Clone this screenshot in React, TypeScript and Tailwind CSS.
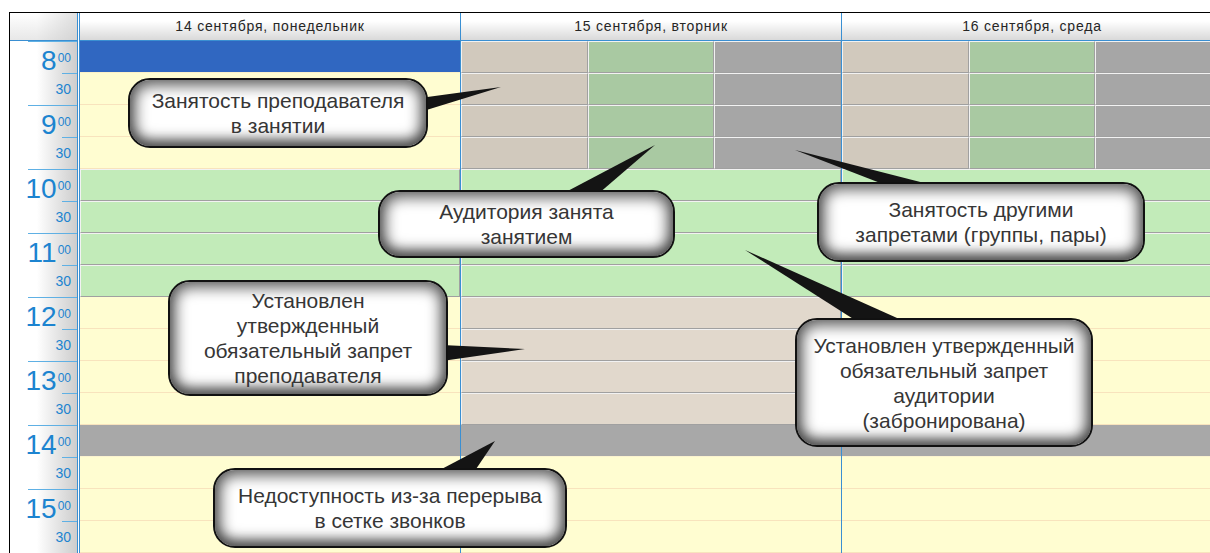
import React from 'react';

type Kind = 'Y' | 'G' | 'Beige' | 'Gray' | 'Blue' | 'Split';

const days: { title: string; rows: Kind[]; cls: string }[] = [
  {
    title: '14 сентября, понедельник',
    rows: ['Blue', 'Y', 'Y', 'Y', 'G', 'G', 'G', 'G', 'Y', 'Y', 'Y', 'Y', 'Gray', 'Y', 'Y', 'Y'],
    cls: 'w-[381px] border-r border-[#3a8fd2]',
  },
  {
    title: '15 сентября, вторник',
    rows: ['Split', 'Split', 'Split', 'Split', 'G', 'G', 'G', 'G', 'Beige', 'Beige', 'Beige', 'Beige', 'Gray', 'Y', 'Y', 'Y'],
    cls: 'w-[381px] border-r border-[#3a8fd2]',
  },
  {
    title: '16 сентября, среда',
    rows: ['Split', 'Split', 'Split', 'Split', 'G', 'G', 'G', 'G', 'Y', 'Y', 'Y', 'Y', 'Gray', 'Y', 'Y', 'Y'],
    cls: 'w-[381px] border-r border-[#3a8fd2]',
  },
];

const hours = ['8', '9', '10', '11', '12', '13', '14', '15'];

const bevel = 'border border-[#f2f2f2] border-b-[#a0a0a0] border-r-[#a0a0a0]';

function Cell({ kind }: { kind: Kind }) {
  if (kind === 'Blue') return <div className="h-[32px] bg-[#3067c1] border-b border-[#fbf1c8]" />;
  if (kind === 'Y') return <div className="h-[32px] bg-[#fffdd1] border-b border-[#f8e3bd]" />;
  if (kind === 'Gray') return <div className="h-[32px] bg-[#a8a8a8] border-b border-[#fbf3cf]" />;
  if (kind === 'G') return <div className={`h-[32px] bg-[#c2ebb9] ${bevel}`} />;
  if (kind === 'Beige') return <div className={`h-[32px] bg-[#e1d8cc] ${bevel}`} />;
  return (
    <div className="h-[32px] grid grid-cols-3">
      <div className={`bg-[#d1c9bd] ${bevel}`} />
      <div className={`bg-[#a9c9a2] ${bevel}`} />
      <div className={`bg-[#a6a6a6] ${bevel}`} />
    </div>
  );
}

function TimeColumn() {
  return (
    <div className="w-[70px] shrink-0 flex flex-col border-r-[3px] border-double border-[#3a8fd2] bg-linear-to-r from-white from-40% to-[#cdcdcd]">
      <div className="h-[28px] border-b border-[#3a8fd2] bg-linear-to-b from-white/40 to-[#d8d8d8]/60" />
      {hours.map((h) => (
        <React.Fragment key={h}>
          <div className="h-[32px]">
            <div className="ml-auto w-[49px] border-t border-[#5fb0e4]" />
            <div className="flex justify-end items-start pr-[6px] mt-[5px] text-[#1c84d0]">
              <span className="text-[28px] leading-none">{h}</span>
              <span className="text-[12px] leading-none mt-[5px] ml-[1px]">00</span>
            </div>
          </div>
          <div className="h-[32px]">
            <div className="ml-auto w-[15px] border-t border-[#5fb0e4]" />
            <div className="flex justify-end pr-[6px] mt-[8px] text-[14px] leading-none text-[#1c84d0]">30</div>
          </div>
        </React.Fragment>
      ))}
    </div>
  );
}

function Bubble({ className, lines }: { className: string; lines: string[] }) {
  return (
    <div
      className={`absolute flex flex-col items-center justify-center rounded-[22px] border-2 border-[#111] bg-white text-center text-[21px] leading-[25px] text-[#363636] shadow-[inset_0_0_14px_6px_rgba(0,0,0,0.6),inset_0_-5px_10px_rgba(0,0,0,0.3)] ${className}`}
    >
      {lines.map((l) => (
        <div key={l}>{l}</div>
      ))}
    </div>
  );
}

export default function App() {
  return (
    <div className="relative w-[1210px] h-[553px] overflow-hidden bg-white font-['Liberation_Sans',Arial,sans-serif]">
      <div className="ml-[9px] mt-[12px] flex w-max border-l border-t border-black">
        <TimeColumn />
        {days.map((d) => (
          <div key={d.title} className={`flex flex-col shrink-0 ${d.cls}`}>
            <div className="h-[28px] flex items-center justify-center border-b border-[#3a8fd2] bg-linear-to-b from-white from-30% to-[#d9d9d9] text-[14px] tracking-[0.8px] text-[#262626]">
              {d.title}
            </div>
            {d.rows.map((k, i) => (
              <Cell key={i} kind={k} />
            ))}
          </div>
        ))}
      </div>

      <svg className="absolute left-0 top-0 pointer-events-none" width="1210" height="553">
        <g fill="#141414">
          <polygon points="420,98 501,87 420,112" />
          <polygon points="562,194 655,145 598,194" />
          <polygon points="795,150 888,186 936,186" />
          <polygon points="442,345 525,349 442,361" />
          <polygon points="745,250 858,322 906,322" />
          <polygon points="495,441 436,472 474,472" />
        </g>
      </svg>

      <Bubble className="left-[128px] top-[78px] w-[300px] h-[70px]" lines={['Занятость преподавателя', 'в занятии']} />
      <Bubble className="left-[378px] top-[190px] w-[297px] h-[68px]" lines={['Аудитория занята', 'занятием']} />
      <Bubble className="left-[817px] top-[182px] w-[328px] h-[80px]" lines={['Занятость другими', 'запретами (группы, пары)']} />
      <Bubble
        className="left-[168px] top-[280px] w-[280px] h-[116px]"
        lines={['Установлен', 'утвержденный', 'обязательный запрет', 'преподавателя']}
      />
      <Bubble
        className="left-[795px] top-[318px] w-[298px] h-[129px]"
        lines={['Установлен утвержденный', 'обязательный запрет', 'аудитории', '(забронирована)']}
      />
      <Bubble className="left-[213px] top-[468px] w-[354px] h-[80px]" lines={['Недоступность из-за перерыва', 'в сетке звонков']} />
    </div>
  );
}
